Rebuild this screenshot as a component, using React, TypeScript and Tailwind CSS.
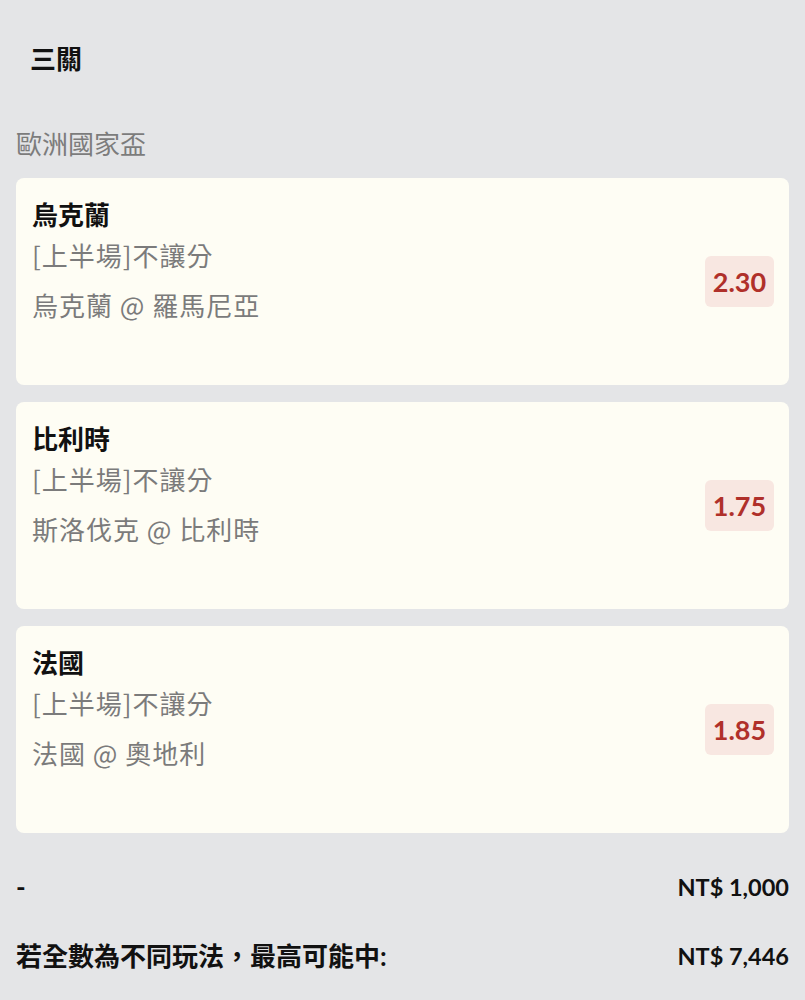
import React from "react";

const legs = [
  { team: "烏克蘭", market: "[上半場]不讓分", match: "烏克蘭 @ 羅馬尼亞", odds: "2.30" },
  { team: "比利時", market: "[上半場]不讓分", match: "斯洛伐克 @ 比利時", odds: "1.75" },
  { team: "法國", market: "[上半場]不讓分", match: "法國 @ 奧地利", odds: "1.85" },
];

export default function App() {
  return (
    <div
      className="min-h-[1000px] w-full bg-[#e4e5e7] px-4 pt-[40px] text-[26px] leading-[39px]"
      style={{ fontFamily: 'Lato, "Noto Sans CJK TC", sans-serif' }}
    >
      <div className="pl-[14px] font-bold text-[#111111]">三關</div>
      <div className="mt-[46px] text-[#7c7c7c]">歐洲國家盃</div>
      <div className="mt-[14px] flex flex-col gap-[17px]">
        {legs.map((l) => (
          <div
            key={l.team}
            className="flex items-center justify-between rounded-lg bg-[#fefdf4] pl-4 pr-[15px]"
          >
            <div className="flex flex-col pt-[18px] pb-[61px]">
              <div className="font-bold text-[#111111]">{l.team}</div>
              <div
                className="text-[26px] tracking-[1px] text-[#7b7b7b]"
                style={{ fontFamily: '"Noto Sans CJK TC", sans-serif' }}
              >
                {l.market}
              </div>
              <div
                className="mt-[11px] text-[26px] tracking-[1px] text-[#7b7b7b]"
                style={{ fontFamily: '"Noto Sans CJK TC", sans-serif' }}
              >
                {l.match}
              </div>
            </div>
            <div className="flex h-[51px] w-[69px] items-center justify-center rounded-md bg-[#f8e7e1] text-[27px] font-bold text-[#b0302a]">
              {l.odds}
            </div>
          </div>
        ))}
      </div>
      <div className="mt-[35px] flex items-center justify-between font-bold text-[#111111]">
        <span>-</span>
        <span className="text-[23.5px]">NT$ 1,000</span>
      </div>
      <div className="mt-[30px] flex items-center justify-between font-bold text-[#111111]">
        <span>若全數為不同玩法，最高可能中:</span>
        <span className="text-[23.5px]">NT$ 7,446</span>
      </div>
    </div>
  );
}
